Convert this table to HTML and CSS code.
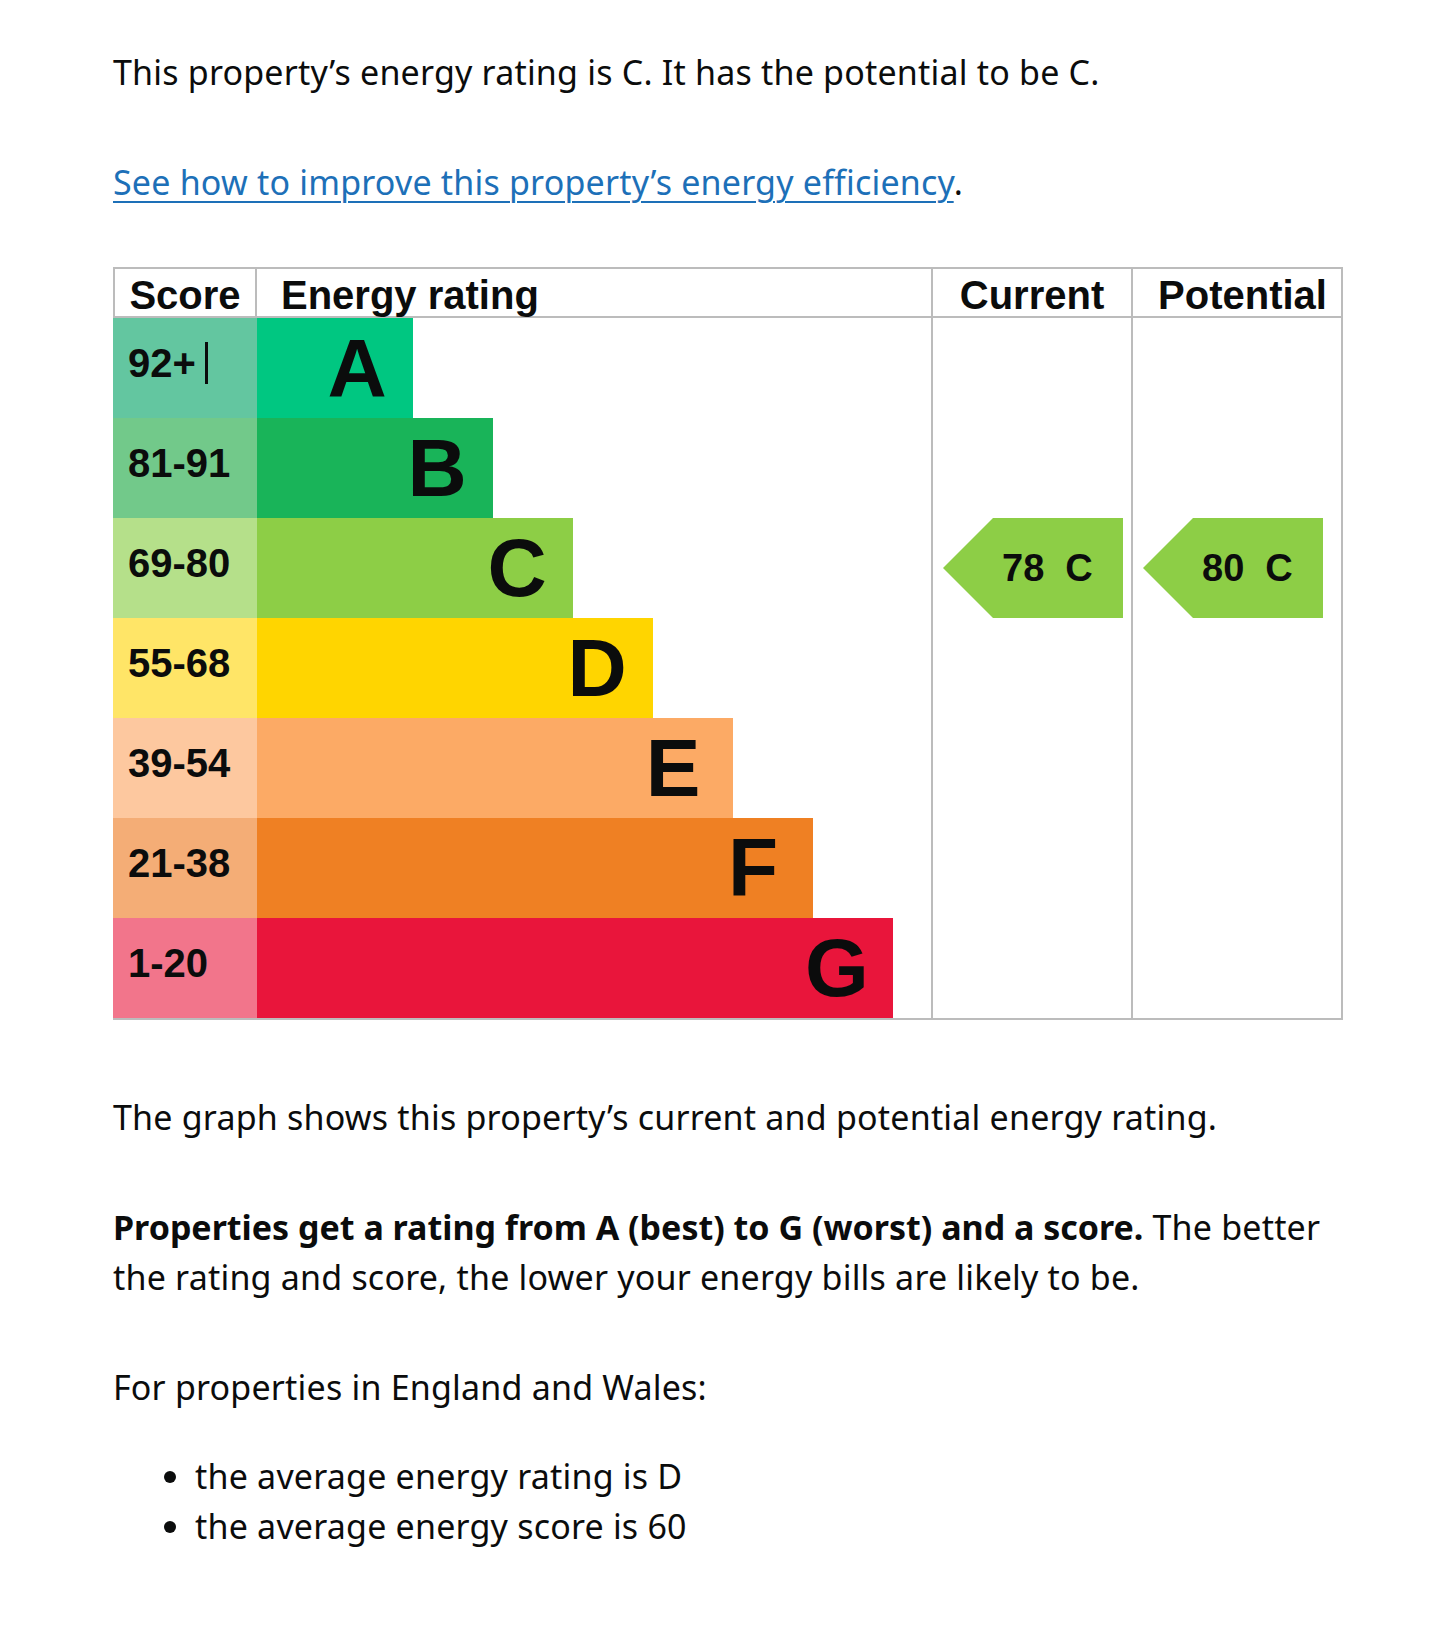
FILE: index.html
```html
<!DOCTYPE html>
<html lang="en">
<head>
<meta charset="utf-8">
<title>Energy rating</title>
<link rel="stylesheet" href="styles.css">
</head>
<body>
<main class="page">
  <p class="body-text">This property’s energy rating is C. It has the potential to be C.</p>
  <p class="body-text"><a href="#" class="link">See how to improve this property’s energy efficiency</a>.</p>

  <div class="epc">
    <div class="epc-head">
      <div class="h h-score">Score</div>
      <div class="h h-rating">Energy rating</div>
      <div class="h h-current">Current</div>
      <div class="h h-potential">Potential</div>
    </div>
    <div class="epc-body">
      <div class="bands">
        <div class="band band-a"><div class="score">92+<span class="caret"></span></div><div class="bar" style="width:156px"><span class="letter">A</span></div></div>
        <div class="band band-b"><div class="score">81-91</div><div class="bar" style="width:236px"><span class="letter">B</span></div></div>
        <div class="band band-c"><div class="score">69-80</div><div class="bar" style="width:316px"><span class="letter">C</span></div></div>
        <div class="band band-d"><div class="score">55-68</div><div class="bar" style="width:396px"><span class="letter">D</span></div></div>
        <div class="band band-e"><div class="score">39-54</div><div class="bar" style="width:476px"><span class="letter">E</span></div></div>
        <div class="band band-f"><div class="score">21-38</div><div class="bar" style="width:556px"><span class="letter">F</span></div></div>
        <div class="band band-g"><div class="score">1-20</div><div class="bar" style="width:636px"><span class="letter">G</span></div></div>
      </div>
      <div class="col col-current">
        <div class="badge"><span class="num">78</span><span class="grade">C</span></div>
      </div>
      <div class="col col-potential">
        <div class="badge"><span class="num">80</span><span class="grade">C</span></div>
      </div>
    </div>
  </div>

  <p class="body-text after-table">The graph shows this property’s current and potential energy rating.</p>
  <p class="body-text"><strong>Properties get a rating from A (best) to G (worst) and a score.</strong> The better the rating and score, the lower your energy bills are likely to be.</p>
  <p class="body-text lead-in">For properties in England and Wales:</p>
  <ul class="list">
    <li>the average energy rating is D</li>
    <li>the average energy score is 60</li>
  </ul>
</main>
</body>
</html>
```

FILE: styles.css
```css
* {
  box-sizing: border-box;
}

body {
  margin: 0;
  background: #ffffff;
  color: #0b0c0c;
  font-family: "Noto Sans", "Open Sans", sans-serif;
}

.page {
  width: 1343px;
  padding: 47px 0 80px 113px;
}

.body-text {
  margin: 0 0 60px;
  font-size: 34px;
  line-height: 50px;
  letter-spacing: 0.2px;
}

.body-text strong {
  font-weight: 700;
  letter-spacing: 0;
}

.link {
  color: #1d70b8;
  text-decoration: underline;
  text-decoration-thickness: 2px;
  text-underline-offset: 6px;
}

.after-table {
  margin-top: 72px;
}

.lead-in {
  margin-bottom: 39px;
}

.list {
  margin: 0;
  padding-left: 82px;
  font-size: 34px;
  line-height: 50px;
  letter-spacing: 0.2px;
}

/* EPC chart */
.epc {
  width: 1230px;
  font-family: "Liberation Sans", Arial, sans-serif;
  font-weight: 700;
  color: #0b0c0c;
}

.epc-head {
  display: grid;
  grid-template-columns: 144px 676px 200px 210px;
  grid-template-rows: 47px;
  border-top: 2px solid #bcbcbc;
  border-bottom: 2px solid #bcbcbc;
}

.h {
  font-size: 40px;
  line-height: 52px;
  border-right: 2px solid #bcbcbc;
  white-space: nowrap;
}

.h-score {
  border-left: 2px solid #bcbcbc;
  text-align: center;
}

.h-rating {
  padding-left: 24px;
}

.h-current {
  text-align: center;
}

.h-potential {
  text-align: center;
  padding-left: 11px;
}

.epc-body {
  display: flex;
  border-bottom: 2px solid #bcbcbc;
}

.bands {
  width: 820px;
  border-right: 2px solid #bcbcbc;
}

.band {
  display: flex;
  height: 100px;
}

.score {
  width: 144px;
  padding-left: 15px;
  font-size: 40px;
  line-height: 90px;
  white-space: nowrap;
}

.caret {
  display: inline-block;
  width: 3px;
  height: 42px;
  margin-left: 9px;
  background: #0b0c0c;
  vertical-align: -7px;
}

.bar {
  display: flex;
  justify-content: flex-end;
  font-size: 82px;
  line-height: 100px;
}

.letter {
  width: 112px;
  text-align: center;
}

.band-e .letter,
.band-f .letter {
  width: 120px;
}

.band-a .score { background: #63c6a0; }
.band-a .bar { background: #00c781; }
.band-b .score { background: #72c98a; }
.band-b .bar { background: #19b459; }
.band-c .score { background: #b5e08a; }
.band-c .bar { background: #8dce46; }
.band-d .score { background: #ffe567; }
.band-d .bar { background: #ffd500; }
.band-e .score { background: #fdc89f; }
.band-e .bar { background: #fcaa65; }
.band-f .score { background: #f4ad76; }
.band-f .bar { background: #ef8023; }
.band-g .score { background: #f2758b; }
.band-g .bar { background: #e9153b; }

.col {
  border-right: 2px solid #bcbcbc;
  padding: 200px 0 0 10px;
}

.col-current {
  width: 200px;
}

.col-potential {
  width: 210px;
}

.badge {
  display: flex;
  gap: 21px;
  width: 180px;
  height: 100px;
  padding-left: 59px;
  background: #8dce46;
  clip-path: polygon(50px 0, 100% 0, 100% 100%, 50px 100%, 0 50%);
  font-size: 38px;
  line-height: 100px;
}
```
